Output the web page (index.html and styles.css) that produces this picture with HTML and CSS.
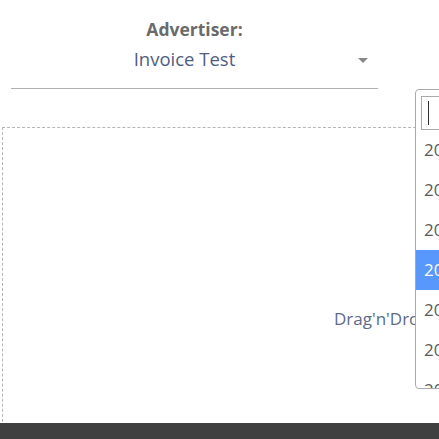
FILE: index.html
```html
<!DOCTYPE html>
<html>
<head>
<meta charset="utf-8">
<link rel="stylesheet" href="styles.css">
</head>
<body>
<div class="page">
  <div class="field">
    <div class="label">Advertiser:</div>
    <div class="select">
      <span class="value">Invoice Test</span>
      <span class="arrow"></span>
    </div>
  </div>
  <div class="dropzone">
    <span class="dz-text">Drag'n'Drop files here</span>
  </div>
  <div class="footer"></div>
  <div class="dropdown">
    <div class="search"><span class="caret"></span></div>
    <ul class="options">
      <li>2019</li>
      <li>2020</li>
      <li>2021</li>
      <li class="active">2022</li>
      <li>2023</li>
      <li>2024</li>
      <li>2025</li>
    </ul>
  </div>
</div>
</body>
</html>
```

FILE: styles.css
```css
html, body {
  margin: 0;
  padding: 0;
  overflow: hidden;
  background: #fff;
}
.page {
  position: relative;
  width: 439px;
  height: 439px;
  overflow: hidden;
  font-family: "Open Sans", sans-serif;
}
.field {
  width: 367px;
  margin-left: 11px;
  padding-top: 18px;
  display: flex;
  flex-direction: column;
  align-items: center;
}
.label {
  font-weight: 700;
  font-size: 17.5px;
  line-height: 22px;
  color: #6b6b6b;
}
.select {
  width: 100%;
  box-sizing: border-box;
  height: 49px;
  border-bottom: 1px solid #b0b0b0;
  display: flex;
  align-items: flex-start;
  padding-top: 7px;
  padding-right: 10px;
}
.value {
  flex: 1;
  text-align: center;
  font-size: 18.5px;
  line-height: 24px;
  color: #4f5d80;
}
.arrow {
  margin-top: 11px;
  width: 0;
  height: 0;
  border-left: 5px solid transparent;
  border-right: 5px solid transparent;
  border-top: 5px solid #888;
}
.dropzone {
  margin-top: 38px;
  margin-left: 2px;
  width: 700px;
  height: 320px;
  border: 1px dashed #b5b5b5;
  box-sizing: border-box;
  display: flex;
  align-items: center;
  padding-left: 331px;
  padding-top: 62px;
}
.dz-text {
  font-size: 17px;
  color: #5d6a88;
  white-space: nowrap;
}
.footer {
  position: absolute;
  left: 0;
  right: 0;
  top: 423px;
  height: 16px;
  background: #404040;
}
.dropdown {
  position: absolute;
  left: 415px;
  top: 89px;
  width: 120px;
  height: 300px;
  box-sizing: border-box;
  border: 1px solid #aaa;
  border-radius: 4px;
  background: #fff;
  display: flex;
  flex-direction: column;
  overflow: hidden;
}
.search {
  margin: 6px 0 0 5px;
  height: 34px;
  box-sizing: border-box;
  border: 1px solid #aaa;
  display: flex;
  align-items: center;
  padding-left: 6px;
}
.caret {
  width: 1px;
  height: 24px;
  background: #333;
}
.options {
  list-style: none;
  margin: 0;
  padding: 0;
  flex: 1;
  overflow: hidden;
}
.options li {
  height: 40px;
  line-height: 40px;
  padding-left: 8px;
  font-size: 17px;
  color: #5a5a5a;
}
.options li.active {
  background: #5897fb;
  color: #fff;
}
```
